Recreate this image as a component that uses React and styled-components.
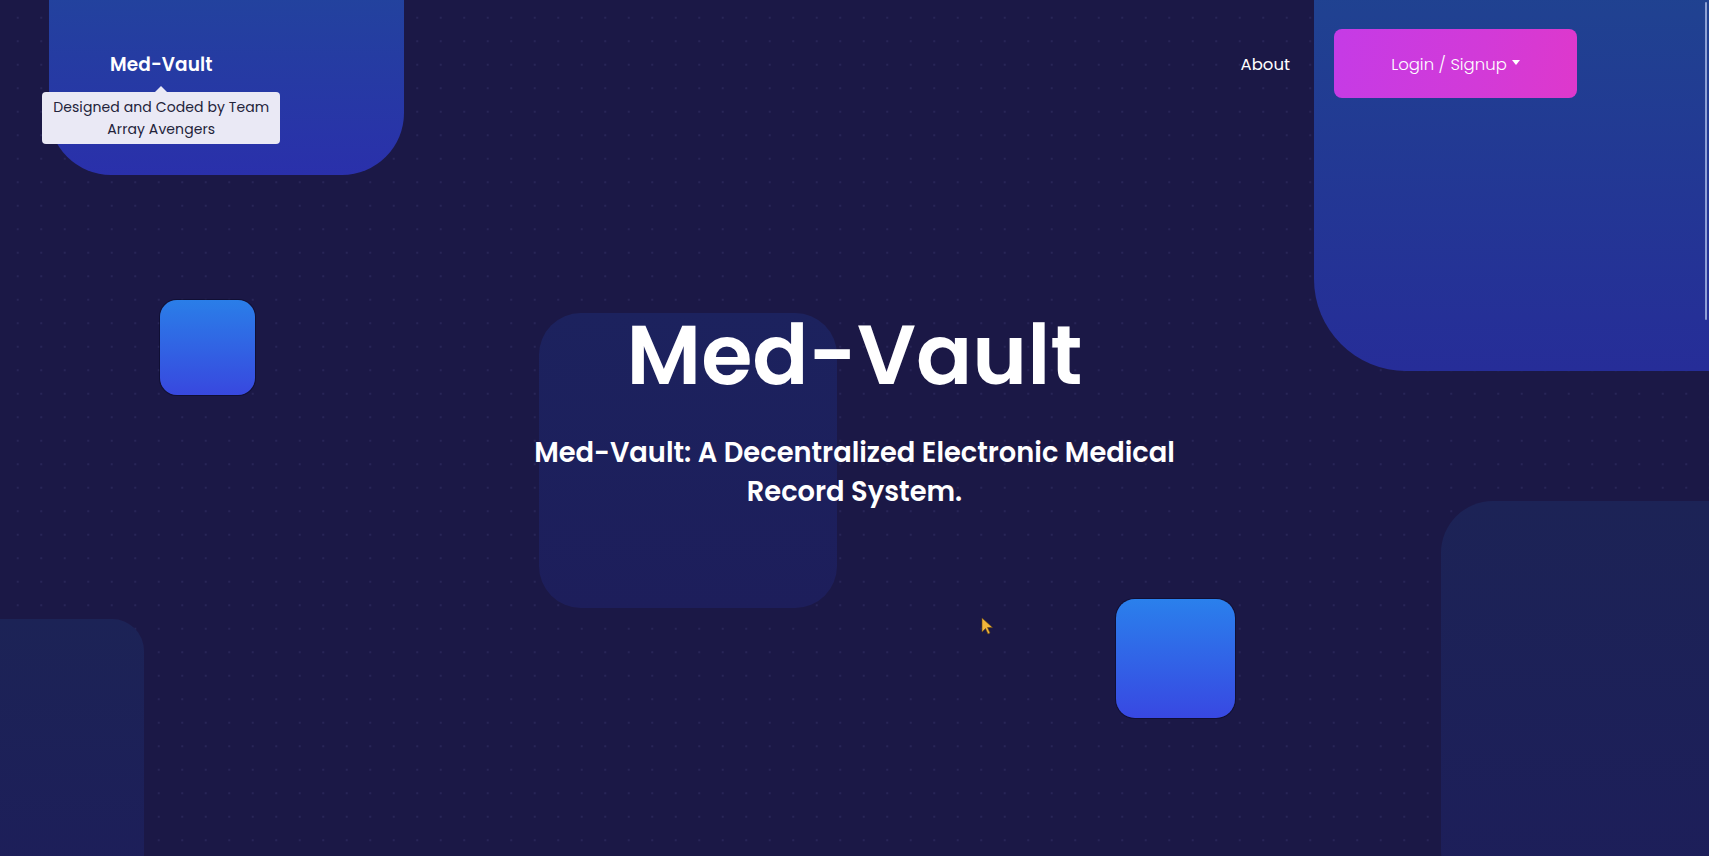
import React from "react";
import styled, { createGlobalStyle } from "styled-components";

const GlobalStyle = createGlobalStyle`
  * { box-sizing: border-box; }
  html, body { margin: 0; padding: 0; height: 100%; }
  body {
    font-family: "Poppins", "Inter", "Noto Sans", sans-serif;
    background: #1b1846;
    overflow: hidden;
  }
`;

const Page = styled.div`
  position: relative;
  width: 100%;
  height: 856px;
  overflow: hidden;
  background-color: #1b1846;
  background-image: radial-gradient(rgba(120, 120, 190, 0.14) 1px, transparent 1.4px);
  background-size: 23.5px 23.5px;
  background-position: 6px 6px;
  color: #fff;
`;

const Shapes = styled.div`
  position: absolute;
  inset: 0;
  pointer-events: none;
  z-index: 0;
`;

const Shape = styled.div`
  position: absolute;
  left: ${(p) => p.$x}px;
  top: ${(p) => p.$y}px;
  width: ${(p) => p.$w}px;
  height: ${(p) => p.$h}px;
  border-radius: ${(p) => p.$r};
  background: ${(p) => p.$bg};
  box-shadow: ${(p) => p.$shadow || "none"};
`;

const Content = styled.div`
  position: relative;
  z-index: 1;
  display: flex;
  flex-direction: column;
`;

const Nav = styled.nav`
  display: flex;
  align-items: center;
  justify-content: space-between;
  padding: 29px 132px 0 110px;
  height: 98px;
`;

const Brand = styled.div`
  position: relative;
  font-size: 18.5px;
  font-weight: 600;
  letter-spacing: 0.1px;
  color: #fff;
  margin-top: 1px;
`;

const Tooltip = styled.div`
  position: absolute;
  top: 41px;
  left: 50%;
  transform: translateX(-50%);
  width: 238px;
  padding: 4px 6px 4px;
  background: #eae9f5;
  color: #23233a;
  font-size: 14px;
  font-weight: 400;
  line-height: 22px;
  text-align: center;
  border-radius: 4px;
  &::before {
    content: "";
    position: absolute;
    top: -6px;
    left: 50%;
    margin-left: -6px;
    border-left: 6px solid transparent;
    border-right: 6px solid transparent;
    border-bottom: 6px solid #eae9f5;
  }
`;

const NavRight = styled.div`
  display: flex;
  align-items: center;
  gap: 44px;
`;

const NavLink = styled.a`
  font-size: 16.5px;
  font-weight: 400;
  color: #fff;
  text-decoration: none;
  margin-top: 2px;
`;

const LoginButton = styled.button`
  width: 243px;
  height: 69px;
  border: none;
  border-radius: 8px;
  background: linear-gradient(100deg, #c53be6 0%, #d23ad8 60%, #de38cc 100%);
  color: #fff;
  font-family: inherit;
  font-size: 16.5px;
  font-weight: 300;
  display: flex;
  align-items: center;
  justify-content: center;
  gap: 5px;
  padding-top: 2px;
  cursor: pointer;
`;

const Caret = styled.span`
  display: inline-block;
  width: 0;
  height: 0;
  margin-top: -3px;
  border-left: 4.5px solid transparent;
  border-right: 4.5px solid transparent;
  border-top: 5px solid #fff;
`;

const Hero = styled.main`
  display: flex;
  flex-direction: column;
  align-items: center;
  padding-top: 207px;
  text-align: center;
`;

const Title = styled.h1`
  margin: 0;
  font-size: 83px;
  line-height: 100px;
  font-weight: 600;
  letter-spacing: 0;
  color: #fff;
`;

const Subtitle = styled.p`
  margin: 28px 0 0;
  max-width: 700px;
  font-size: 27.3px;
  line-height: 39px;
  font-weight: 600;
  color: #fff;
`;

const Scrollbar = styled.div`
  position: absolute;
  right: 2px;
  top: 2px;
  width: 2px;
  height: 318px;
  border-radius: 1px;
  background: rgba(170, 185, 230, 0.8);
  z-index: 2;
`;

const Cursor = styled.svg`
  position: absolute;
  left: 981px;
  top: 617px;
  z-index: 2;
`;

const shapes = [
  { x: 49, y: -40, w: 355, h: 215, r: "0 0 62px 62px", bg: "linear-gradient(180deg, #21469b 0%, #2a30ab 100%)" },
  { x: 1314, y: -40, w: 440, h: 411, r: "0 0 0 92px", bg: "linear-gradient(180deg, #1f4490 0%, #262d98 100%)" },
  { x: 539, y: 313, w: 298, h: 295, r: "42px", bg: "linear-gradient(180deg, #1c225e 0%, #1d1e5b 100%)" },
  { x: -40, y: 619, w: 184, h: 280, r: "32px", bg: "linear-gradient(180deg, #1c2356 0%, #1d1e5a 100%)" },
  { x: 1441, y: 501, w: 320, h: 400, r: "52px", bg: "linear-gradient(180deg, #1c2356 0%, #1d1e5a 100%)" },
  { x: 160, y: 300, w: 95, h: 95, r: "17px", bg: "linear-gradient(180deg, #2a7ee8 0%, #3848df 100%)", shadow: "0 0 0 1px rgba(10,10,40,0.6)" },
  { x: 1116, y: 599, w: 119, h: 119, r: "19px", bg: "linear-gradient(180deg, #2a80ec 0%, #3848e2 100%)", shadow: "0 0 0 1px rgba(10,10,40,0.6)" },
];

export default function App() {
  return (
    <>
      <GlobalStyle />
      <Page>
        <Shapes>
          {shapes.map((s, i) => (
            <Shape key={i} $x={s.x} $y={s.y} $w={s.w} $h={s.h} $r={s.r} $bg={s.bg} $shadow={s.shadow} />
          ))}
        </Shapes>
        <Content>
          <Nav>
            <Brand>
              Med-Vault
              <Tooltip>Designed and Coded by Team Array Avengers</Tooltip>
            </Brand>
            <NavRight>
              <NavLink href="#">About</NavLink>
              <LoginButton>
                Login / Signup <Caret />
              </LoginButton>
            </NavRight>
          </Nav>
          <Hero>
            <Title>Med-Vault</Title>
            <Subtitle>Med-Vault: A Decentralized Electronic Medical Record System.</Subtitle>
          </Hero>
        </Content>
        <Cursor width="14" height="20" viewBox="0 0 14 20">
          <path d="M1 1 L1 15 L4.5 11.5 L7 17 L9 16 L6.5 10.5 L11.5 10.5 Z" fill="#f2b53a" stroke="#6a4a10" strokeWidth="0.6" />
        </Cursor>
        <Scrollbar />
      </Page>
    </>
  );
}
